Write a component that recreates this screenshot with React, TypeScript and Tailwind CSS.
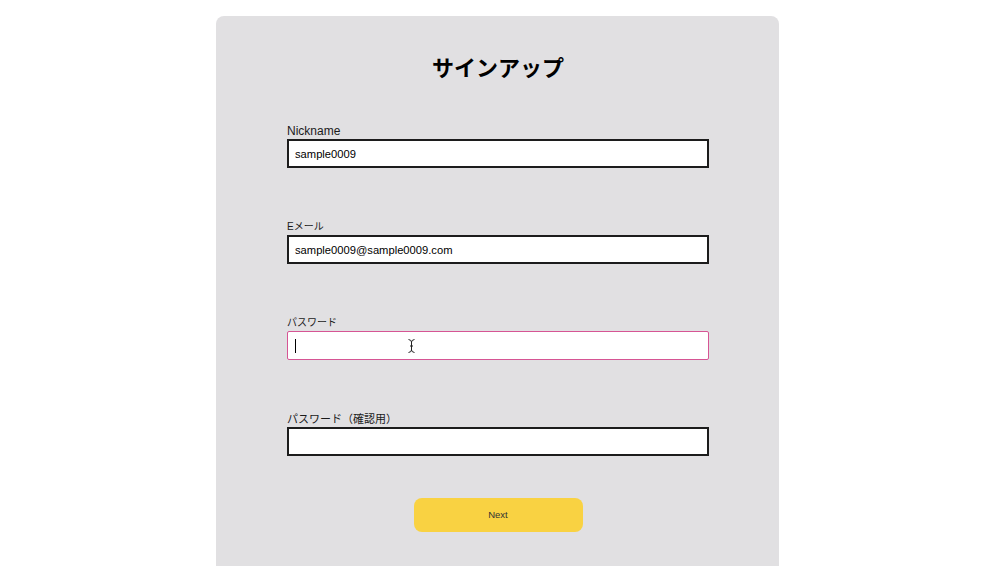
import React from "react";

const font = { fontFamily: '"Liberation Sans", "Noto Sans CJK JP", sans-serif' };

function Field({ label, labelClass, value }: { label: string; labelClass: string; value?: string }) {
  return (
    <div className="flex flex-col">
      <label className={`block h-4 leading-4 text-[#1a1a1a] ${labelClass}`}>{label}</label>
      <input
        readOnly
        defaultValue={value}
        className="h-[29px] w-full border-2 border-[#1c1c1c] bg-white px-[6px] text-[11.2px] text-black outline-none"
      />
    </div>
  );
}

export default function App() {
  return (
    <main className="min-h-screen bg-white pt-4 pr-[5px] flex justify-center" style={font}>
      <div className="w-[563px] rounded-lg bg-[#e1e0e2] pl-[71px] pr-[70px] pt-[34px] pb-16">
        <h1
          className="text-center text-[22px] font-bold leading-8 text-black"
          style={{ fontFamily: '"Noto Sans CJK JP", sans-serif' }}
        >
          サインアップ
        </h1>

        <form className="mt-[41px] flex flex-col gap-[51px]">
          <Field label="Nickname" labelClass="text-[12px]" value="sample0009" />
          <Field label="Eメール" labelClass="text-[10px]" value="sample0009@sample0009.com" />

          <div className="flex flex-col">
            <label className="block h-4 leading-4 text-[10px] text-[#1a1a1a]">パスワード</label>
            <div className="relative h-[29px] rounded-[2px] border border-[#d65594] bg-white">
              <input type="password" readOnly className="h-full w-full bg-transparent px-[7px] text-[11px] outline-none" />
              <span className="absolute left-[7px] top-[7px] h-[14px] w-px bg-black" />
              <svg className="absolute left-[120px] top-[7px]" width="7" height="14" viewBox="0 0 7 14" fill="none" stroke="#222" strokeWidth="1">
                <path d="M0.5 0.5 Q3.5 1 3.5 3 V11 Q3.5 13 0.5 13.5 M6.5 0.5 Q3.5 1 3.5 3 M6.5 13.5 Q3.5 13 3.5 11 M2 7 H5" />
              </svg>
            </div>
          </div>

          <Field label="パスワード（確認用）" labelClass="text-[11px]" />
        </form>

        <div className="mt-[42px] flex justify-center">
          <button type="button" className="h-[34px] w-[169px] rounded-lg bg-[#f9d242] text-[9.5px] text-[#333]">
            Next
          </button>
        </div>
      </div>
    </main>
  );
}
